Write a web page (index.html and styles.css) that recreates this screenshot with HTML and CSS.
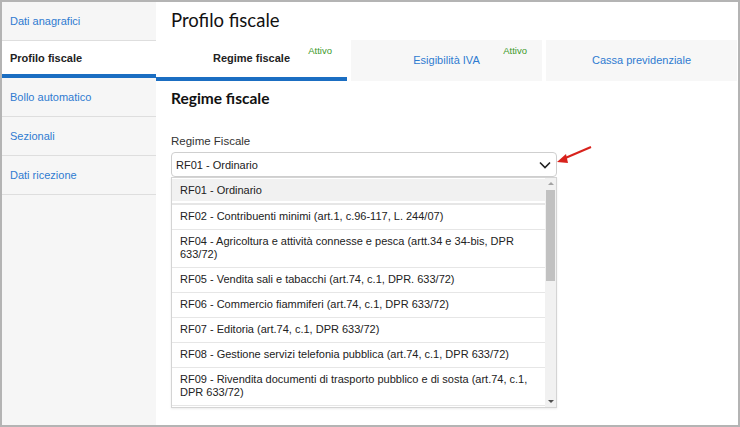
FILE: index.html
```html
<!DOCTYPE html>
<html lang="it">
<head>
    <meta charset="UTF-8">
    <title>Profilo fiscale</title>
    <link rel="stylesheet" href="styles.css">
</head>
<body>
    <div class="frame">
        <!-- Sidebar -->
        <nav class="sidebar">
            <a class="side-item">Dati anagrafici</a>
            <a class="side-item active">Profilo fiscale</a>
            <a class="side-item">Bollo automatico</a>
            <a class="side-item">Sezionali</a>
            <a class="side-item">Dati ricezione</a>
        </nav>

        <!-- Main -->
        <main class="main">
            <h1 class="page-title">Profilo fiscale</h1>

            <div class="tabs">
                <div class="tab active">Regime fiscale<span class="tab-badge">Attivo</span></div>
                <div class="tab">Esigibilità IVA<span class="tab-badge">Attivo</span></div>
                <div class="tab">Cassa previdenziale</div>
            </div>

            <section class="content">
                <h2 class="section-title">Regime fiscale</h2>
                <label class="field-label">Regime Fiscale</label>

                <div class="select">
                    <span>RF01 - Ordinario</span>
                    <svg class="chevron" width="12" height="8" viewBox="0 0 12 8">
                        <polyline points="1,1.5 6,6.5 11,1.5" fill="none" stroke="#222" stroke-width="1.6"/>
                    </svg>
                </div>

                <div class="dropdown">
                    <ul class="options">
                        <li class="option selected">RF01 - Ordinario</li>
                        <li class="option">RF02 - Contribuenti minimi (art.1, c.96-117, L. 244/07)</li>
                        <li class="option">RF04 - Agricoltura e attività connesse e pesca (artt.34 e 34-bis, DPR 633/72)</li>
                        <li class="option">RF05 - Vendita sali e tabacchi (art.74, c.1, DPR. 633/72)</li>
                        <li class="option">RF06 - Commercio fiammiferi (art.74, c.1, DPR 633/72)</li>
                        <li class="option">RF07 - Editoria (art.74, c.1, DPR 633/72)</li>
                        <li class="option">RF08 - Gestione servizi telefonia pubblica (art.74, c.1, DPR 633/72)</li>
                        <li class="option">RF09 - Rivendita documenti di trasporto pubblico e di sosta (art.74, c.1, DPR 633/72)</li>
                    </ul>
                    <div class="scrollbar">
                        <span class="arrow-up"></span>
                        <span class="thumb"></span>
                        <span class="arrow-down"></span>
                    </div>
                </div>
            </section>
        </main>

        <!-- annotation arrow -->
        <svg class="annotation" width="40" height="24" viewBox="0 0 40 24">
            <line x1="36" y1="3" x2="8" y2="15" stroke="#d8221c" stroke-width="2"/>
            <polygon points="2,18 11,10 13,19" fill="#d8221c"/>
        </svg>
    </div>
</body>
</html>
```

FILE: styles.css
```css
:root {
    --link-color: #2f7bd1;
    --active-bar: #1b6ec2;
    --side-bg: #f6f6f6;
    --line-color: #dedede;
    --text-color: #222;
}

* {
    margin: 0;
    padding: 0;
    box-sizing: border-box;
}

body {
    font-family: 'Liberation Sans', Arial, sans-serif;
    font-size: 11px;
    color: var(--text-color);
    background: #fff;
}

.frame {
    position: relative;
    width: 740px;
    height: 427px;
    border: 2px solid #b4b4b4;
    display: flex;
    overflow: hidden;
}

/* Sidebar */
.sidebar {
    width: 154px;
    background: var(--side-bg);
    display: flex;
    flex-direction: column;
}

.side-item {
    height: 39px;
    line-height: 39px;
    padding-left: 8px;
    color: var(--link-color);
    border-bottom: 1px solid var(--line-color);
}

.side-item.active {
    height: 37px;
    line-height: 34px;
    background: #fff;
    color: var(--text-color);
    font-weight: bold;
    border-bottom: 4px solid var(--active-bar);
}

/* Main */
.main {
    flex: 1;
    display: flex;
    flex-direction: column;
}

.page-title {
    font-family: Lato, sans-serif;
    font-weight: normal;
    font-size: 18.5px;
    line-height: 36px;
    height: 38px;
    padding-left: 15px;
    color: #111;
}

.tabs {
    display: grid;
    grid-template-columns: 191px 191px 191px;
    gap: 4px;
    height: 38px;
}

.tab {
    position: relative;
    background: #f7f7f7;
    color: var(--link-color);
    text-align: center;
    line-height: 41px;
}

.tab.active {
    background: #fff;
    color: var(--text-color);
    font-weight: bold;
    line-height: 37px;
    border-bottom: 4px solid var(--active-bar);
}

.tab-badge {
    position: absolute;
    top: 5px;
    right: 15px;
    font-size: 9.5px;
    font-weight: normal;
    line-height: 12px;
    color: #3c9a2c;
}

.content {
    padding: 0 15px;
}

.section-title {
    font-family: Lato, sans-serif;
    font-size: 15.5px;
    font-weight: bold;
    line-height: 20px;
    margin-top: 10px;
    color: #111;
}

.field-label {
    display: block;
    margin-top: 26px;
    margin-bottom: 4px;
    line-height: 14px;
    font-size: 11.5px;
    color: #333;
}

.select {
    width: 386px;
    height: 25px;
    border: 1px solid #cfcfcf;
    border-radius: 4px;
    display: flex;
    align-items: center;
    justify-content: space-between;
    padding: 0 5px 0 4px;
}

.chevron {
    display: block;
}

.dropdown {
    width: 386px;
    height: 231px;
    border: 1px solid #d4d4d4;
    display: flex;
    box-shadow: 0 1px 2px rgba(0,0,0,0.08);
}

.options {
    flex: 1;
    list-style: none;
    overflow: hidden;
    padding-top: 1px;
}

.option {
    padding: 5px 8px 6px;
    line-height: 13px;
    border-bottom: 1px solid #e6e6e6;
}

.option.selected {
    background: #f1f1f1;
    border-bottom: 2px solid #e6e6e6;
    box-shadow: inset 0 -2px 0 #fff;
}

.scrollbar {
    width: 11px;
    background: #f1f1f1;
    display: flex;
    flex-direction: column;
    align-items: center;
}

.arrow-up,
.arrow-down {
    width: 0;
    height: 0;
    border-left: 3px solid transparent;
    border-right: 3px solid transparent;
    margin: 4px 0;
}

.arrow-up {
    border-bottom: 3px solid #a3a3a3;
}

.arrow-down {
    border-top: 3px solid #505050;
    margin-top: auto;
}

.thumb {
    width: 9px;
    height: 91px;
    background: #c1c1c1;
    margin-top: 1px;
}

/* Annotation */
.annotation {
    position: absolute;
    left: 553px;
    top: 142px;
}
```
